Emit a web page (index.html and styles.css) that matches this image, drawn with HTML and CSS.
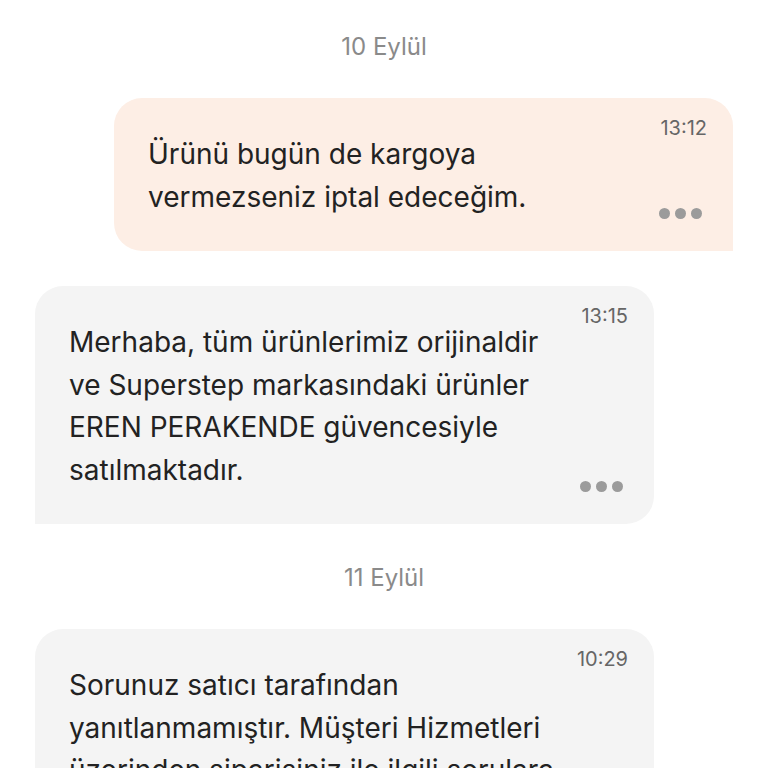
FILE: index.html
```html
<!DOCTYPE html>
<html lang="tr">
<head>
  <meta charset="UTF-8" />
  <title>Mesajlar</title>
  <link rel="stylesheet" href="styles.css">
</head>
<body>

<div class="chat">
  <div class="date">10 Eylül</div>

  <div class="bubble outgoing">
    <div class="msg-text">Ürünü bugün de kargoya vermezseniz iptal edeceğim.</div>
    <div class="meta">
      <span class="time">13:12</span>
      <span class="dots"><i></i><i></i><i></i></span>
    </div>
  </div>

  <div class="bubble incoming">
    <div class="msg-text">Merhaba, tüm ürünlerimiz orijinaldir ve Superstep markasındaki ürünler EREN PERAKENDE güvencesiyle satılmaktadır.</div>
    <div class="meta">
      <span class="time">13:15</span>
      <span class="dots"><i></i><i></i><i></i></span>
    </div>
  </div>

  <div class="date">11 Eylül</div>

  <div class="bubble incoming">
    <div class="msg-text">Sorunuz satıcı tarafından yanıtlanmamıştır. Müşteri Hizmetleri üzerinden siparişiniz ile ilgili sorulara ulaşabilirsiniz.</div>
    <div class="meta">
      <span class="time">10:29</span>
      <span class="dots"><i></i><i></i><i></i></span>
    </div>
  </div>
</div>

</body>
</html>
```
FILE: styles.css
```css
body {
  margin: 0;
  font-family: Inter, "Noto Sans", sans-serif;
  background: #fff;
  color: #222;
}

.chat {
  padding: 35px 35px 0;
  display: flex;
  flex-direction: column;
  gap: 35px;
}

.date {
  text-align: center;
  font-size: 24px;
  line-height: 24px;
  color: #8a8a8a;
  margin-bottom: 4px;
}

.bubble + .date {
  margin-top: 7px;
}

.bubble {
  width: 619px;
  box-sizing: border-box;
  display: flex;
  padding: 18px 26px 33px 34px;
  border-radius: 28px;
}

.outgoing {
  align-self: flex-end;
  background: #fdeee5;
  border-bottom-right-radius: 0;
}

.incoming {
  align-self: flex-start;
  background: #f4f4f4;
  border-bottom-left-radius: 0;
}

.msg-text {
  flex: 1;
  max-width: 490px;
  margin-top: 17px;
  font-size: 28px;
  line-height: 42.5px;
}

.meta {
  margin-left: auto;
  display: flex;
  flex-direction: column;
  align-items: flex-end;
  justify-content: space-between;
}

.time {
  font-size: 20px;
  line-height: 24px;
  color: #666;
}

.dots {
  display: flex;
  gap: 5px;
  margin: 0 5px -1px 0;
}

.dots i {
  width: 11px;
  height: 11px;
  border-radius: 50%;
  background: #9b9b9b;
}
```
